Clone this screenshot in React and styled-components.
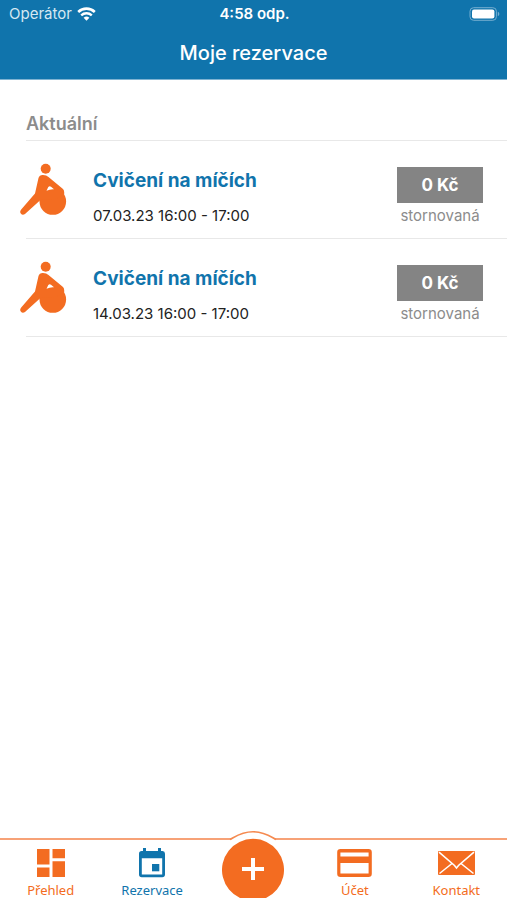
import React from "react";
import styled, { createGlobalStyle } from "styled-components";

const BLUE = "#1074ac";
const ORANGE = "#f36c21";

const GlobalStyle = createGlobalStyle`
  * {
    box-sizing: border-box;
  }
  body {
    margin: 0;
    background: #fff;
    font-family: Inter, "Liberation Sans", sans-serif;
  }
`;

const Screen = styled.div`
  display: flex;
  flex-direction: column;
  min-height: 100vh;
`;

const Header = styled.header`
  background: ${BLUE};
  color: #fff;
  border-bottom: 1px solid #7fb3d2;
`;

const StatusBar = styled.div`
  display: grid;
  grid-template-columns: 1fr auto 1fr;
  align-items: center;
  height: 27px;
  padding: 0 7px 0 9px;
  font-size: 15px;
`;

const Operator = styled.div`
  display: flex;
  align-items: center;
  gap: 5px;
  color: #d6e8f2;
`;

const Time = styled.div`
  font-weight: 600;
`;

const Battery = styled.div`
  display: flex;
  justify-content: flex-end;
`;

const Title = styled.h1`
  margin: 0;
  line-height: 52px;
  text-align: center;
  font-size: 20px;
  font-weight: 500;
`;

const Content = styled.main`
  flex: 1;
  padding: 33px 0 0 26px;
`;

const SectionTitle = styled.h2`
  margin: 0;
  padding-bottom: 5px;
  border-bottom: 1px solid #e8e8e8;
  color: #8c8c8c;
  font-size: 18px;
  line-height: 22px;
  font-weight: 600;
`;

const List = styled.ul`
  list-style: none;
  margin: 0;
  padding: 0;
`;

const Row = styled.li`
  display: flex;
  height: 98px;
  padding-right: 24px;
  border-bottom: 1px solid #e8e8e8;

  svg {
    flex: none;
    margin: 21px 26px 0 -6px;
  }
`;

const Info = styled.div`
  flex: 1;
  padding-top: 27px;
`;

const Name = styled.h3`
  margin: 0;
  color: ${BLUE};
  font-size: 19px;
  line-height: 26px;
  font-weight: 700;
`;

const Date = styled.div`
  margin-top: 12px;
  color: #222;
  font-size: 15px;
  line-height: 20px;
`;

const Payment = styled.div`
  width: 86px;
  padding-top: 26px;
  text-align: center;
`;

const Price = styled.div`
  background: #848484;
  color: #fff;
  font-size: 17px;
  font-weight: 700;
  line-height: 36px;
`;

const State = styled.div`
  color: #8c8c8c;
  font-size: 15px;
  line-height: 26px;
`;

const TabBar = styled.nav`
  position: sticky;
  bottom: 0;
  display: grid;
  grid-template-columns: repeat(5, 1fr);
  grid-template-rows: 100%;
  height: 62px;
  background: #fff;
  border-top: 2px solid #f7a277;
`;

const Tab = styled.a`
  display: flex;
  flex-direction: column;
  align-items: center;
  padding-top: 8px;
  color: ${(props) => (props.$active ? BLUE : ORANGE)};
  font-family: "Noto Sans", "Open Sans", sans-serif;
  font-size: 13px;
  line-height: 18px;
  text-decoration: none;
`;

const TabIcon = styled.span`
  display: flex;
  align-items: center;
  height: 30px;
  margin-bottom: 3px;
`;

const AddButton = styled.button`
  position: relative;
  justify-self: center;
  align-self: end;
  height: 70px;
  padding: 0;
  border: 0;
  background: none;
  cursor: pointer;

  svg {
    display: block;
  }
`;

const WifiIcon = () => (
  <svg width="19" height="14" viewBox="0 0 19 14" fill="none" aria-hidden="true">
    <path d="M1.2 5a12 12 0 0 1 16.6 0" stroke="#fff" strokeWidth="2.6" />
    <path d="M4.2 8.4a7.6 7.6 0 0 1 10.6 0" stroke="#fff" strokeWidth="2.3" />
    <path d="M6.6 10.8a4.2 4.2 0 0 1 5.8 0L9.5 13.8z" fill="#fff" />
  </svg>
);

const BatteryIcon = () => (
  <svg width="31" height="14" viewBox="0 0 31 14" aria-hidden="true">
    <rect x="1" y="0.7" width="26.4" height="12.6" rx="3.6" fill="none" stroke="#75aed0" />
    <rect x="3" y="2.6" width="22.4" height="8.8" rx="2" fill="#fff" />
    <path d="M28.8 4.8c2 .7 2 3.7 0 4.4z" fill="#75aed0" />
  </svg>
);

const BallIcon = () => (
  <svg width="47" height="54" viewBox="0 0 47 54" aria-hidden="true">
    <circle cx="25.7" cy="6.8" r="5" fill={ORANGE} />
    <circle cx="32.8" cy="39.5" r="13.3" fill={ORANGE} />
    <path
      d="M18.5 16Q19.5 12.8 23 13Q26.5 13 28.5 15L43 27Q44.8 29 44 33L35 37L21 37.5L5 52Q2.5 53.6 .8 51.5Q-.6 49.500 1.200 47.500L15 31.500Z"
      fill={ORANGE}
    />
    <path d="M26.5 28.8L28.3 25Q29.5 23.800 31 24.700L34 27.200Q30.200 26.800 26.500 28.800Z" fill="#fff" />
  </svg>
);

const DashboardIcon = () => (
  <svg width="28" height="28" viewBox="0 0 28 28" fill={ORANGE} aria-hidden="true">
    <path d="M0 0h12.5v15.5H0zM15.5 0H28v9.3H15.5zM0 18.5h12.5V28H0zM15.5 12.3H28V28H15.5z" />
  </svg>
);

const CalendarIcon = () => (
  <svg width="28" height="30" viewBox="0 0 28 30" aria-hidden="true">
    <path
      fillRule="evenodd"
      d="M5 0h3v3h12V0h3v3h1.5A2.7 2.7 0 0 1 27 5.7v20.8a2.8 2.8 0 0 1-2.7 2.7H3.7A2.8 2.8 0 0 1 1 26.5V5.7A2.7 2.7 0 0 1 3.7 3H5zM3.8 10.3v16.2h20.4V10.3z"
      fill={BLUE}
    />
    <rect x="14" y="16" width="7.3" height="7.3" fill={BLUE} />
  </svg>
);

const CardIcon = () => (
  <svg width="35" height="28" viewBox="0 0 35 28" aria-hidden="true">
    <path
      fillRule="evenodd"
      d="M3.5 0h28A3.3 3.3 0 0 1 34.8 3.3v21.4A3.3 3.3 0 0 1 31.5 28h-28A3.3 3.3 0 0 1 .2 24.7V3.3A3.3 3.3 0 0 1 3.5 0zM3.4 3.4v4h28.2v-4zM3.4 14v10.6h28.2V14z"
      fill={ORANGE}
    />
  </svg>
);

const MailIcon = () => (
  <svg width="37" height="24" viewBox="0 0 37 24" aria-hidden="true">
    <rect width="37" height="24" rx="1" fill={ORANGE} />
    <path
      d="M1 1.2L16.5 14.5L18.5 17L20.5 14.5L36 1.2M1.5 22.5L14 12.5M35.5 22.5L23 12.5"
      fill="none"
      stroke="#fff"
      strokeWidth="1.6"
    />
  </svg>
);

const AddIcon = () => (
  <svg width="62" height="70" viewBox="0 0 62 70" aria-hidden="true">
    <path d="M7 11Q19 1.5 31 1.5T55 11z" fill="#fff" />
    <path d="M8 9.400C11 8.500 18 1.700 31 1.700S51 8.500 54 9.400" fill="none" stroke="#f58a50" strokeWidth="1.6" />
    <path d="M18 68A31 31 0 1 1 44 68z" fill={ORANGE} />
    <path d="M31 28v22M20 39h22" stroke="#fff" strokeWidth="4" />
  </svg>
);

const reservations = [
  { name: "Cvičení na míčích", date: "07.03.23 16:00 - 17:00", price: "0 Kč", state: "stornovaná" },
  { name: "Cvičení na míčích", date: "14.03.23 16:00 - 17:00", price: "0 Kč", state: "stornovaná" },
];

const App = () => {
  return (
    <Screen>
      <GlobalStyle />
      <Header>
        <StatusBar>
          <Operator>
            Operátor
            <WifiIcon />
          </Operator>
          <Time>4:58 odp.</Time>
          <Battery>
            <BatteryIcon />
          </Battery>
        </StatusBar>
        <Title>Moje rezervace</Title>
      </Header>
      <Content>
        <SectionTitle>Aktuální</SectionTitle>
        <List>
          {reservations.map((el, i) => (
            <Row key={i}>
              <BallIcon />
              <Info>
                <Name>{el.name}</Name>
                <Date>{el.date}</Date>
              </Info>
              <Payment>
                <Price>{el.price}</Price>
                <State>{el.state}</State>
              </Payment>
            </Row>
          ))}
        </List>
      </Content>
      <TabBar>
        <Tab href="#prehled">
          <TabIcon>
            <DashboardIcon />
          </TabIcon>
          Přehled
        </Tab>
        <Tab href="#rezervace" $active>
          <TabIcon>
            <CalendarIcon />
          </TabIcon>
          Rezervace
        </Tab>
        <AddButton type="button" aria-label="Nová rezervace">
          <AddIcon />
        </AddButton>
        <Tab href="#ucet">
          <TabIcon>
            <CardIcon />
          </TabIcon>
          Účet
        </Tab>
        <Tab href="#kontakt">
          <TabIcon>
            <MailIcon />
          </TabIcon>
          Kontakt
        </Tab>
      </TabBar>
    </Screen>
  );
};

export default App;
